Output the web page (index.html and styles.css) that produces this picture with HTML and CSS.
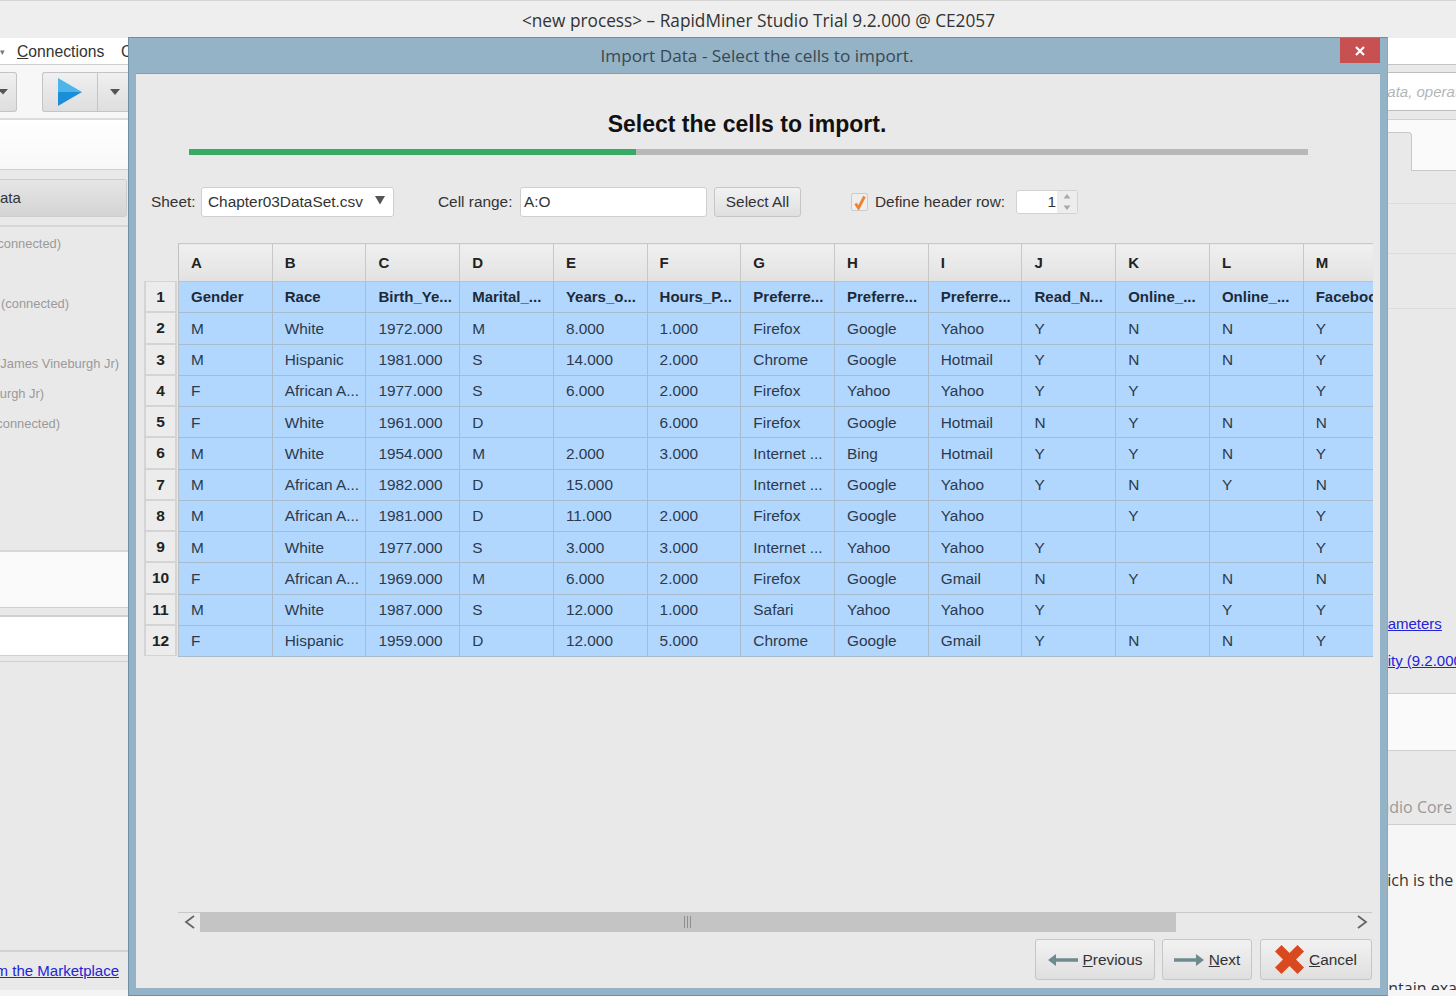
FILE: index.html
```html
<!DOCTYPE html>
<html lang="en">
<head>
<meta charset="utf-8">
<title>RapidMiner Studio - Import Data</title>
<link rel="stylesheet" href="styles.css">
</head>
<body>
<div class="app">
  <header class="app-title">&lt;new process&gt; – RapidMiner Studio Trial 9.2.000 @ CE2057</header>
  <div class="app-main">
    <aside class="left">
      <div class="menu"><span class="menu-cut">▾</span><span class="menu-item"><u>C</u>onnections</span><span class="menu-item2">C</span></div>
      <div class="toolbar">
        <div class="tool-stub"><svg width="10" height="6" viewBox="0 0 10 6"><path d="M-2 0h10L3 5.500z" fill="#555"/></svg></div>
        <div class="run-btn">
          <div class="run-play"><svg width="24" height="28" viewBox="0 0 24 28"><path d="M0 0l24 14H0z" fill="#4db5ea"/><path d="M0 28l24-14H0z" fill="#1a8fd8"/></svg></div>
          <div class="run-menu"><svg width="12" height="7" viewBox="0 0 12 7"><path d="M1 0h10L6 6z" fill="#555"/></svg></div>
        </div>
      </div>
      <div class="white-strip"></div>
      <div class="data-row"><div class="data-btn">ata</div></div>
      <div class="repo">
        <div class="repo-line l1">(connected)</div>
        <div class="repo-line l2">(connected)</div>
        <div class="repo-line l3">(James Vineburgh Jr)</div>
        <div class="repo-line l4">Vineburgh Jr)</div>
        <div class="repo-line l5">(connected)</div>
      </div>
      <div class="pale-band"></div>
      <div class="white-band"></div>
      <div class="left-fill"></div>
      <div class="market"><a href="#">Get more from the Marketplace</a></div>
    </aside>
    <div class="middle"></div>
    <aside class="right">
      <div class="r-menu"></div>
      <div class="r-search"><span>data, operators</span></div>
      <div class="r-tabs"><div class="r-tab"></div></div>
      <div class="r-row r-a"></div>
      <div class="r-row r-b"></div>
      <div class="r-row r-c"></div>
      <div class="r-links">
        <a href="#">parameters</a>
        <a href="#" class="second">Utility (9.2.000)</a>
      </div>
      <div class="r-band"></div>
      <div class="r-core"><span>Studio Core</span></div>
      <div class="r-bottom">
        <div class="r-text t1">which is the</div>
        <div class="r-text t2">contain exa</div>
      </div>
    </aside>
  </div>
</div>

<section class="dialog">
  <div class="dlg-title">Import Data - Select the cells to import.
    <button class="dlg-close" aria-label="Close"><svg width="10" height="10" viewBox="0 0 10 10"><path d="M1 1l8 8M9 1l-8 8" stroke="#fff" stroke-width="2.200"/></svg></button>
  </div>
  <div class="dlg-body">
    <h1 class="step-title">Select the cells to import.</h1>
    <div class="progress"><div class="progress-done"></div></div>
    <div class="controls">
      <label class="lbl lbl-sheet">Sheet:</label>
      <div class="combo"><span>Chapter03DataSet.csv</span><svg width="12" height="9" viewBox="0 0 12 9"><path d="M1 0h10L6 8.500z" fill="#555"/></svg></div>
      <label class="lbl lbl-range">Cell range:</label>
      <div class="textbox">A:O</div>
      <button class="btn btn-all">Select All</button>
      <div class="check"><svg width="14" height="15" viewBox="0 0 14 15"><path d="M2.500 8.500l3 4.500L11.500 1.500" fill="none" stroke="#f0812e" stroke-width="2.800"/></svg></div>
      <label class="lbl lbl-header">Define header row:</label>
      <div class="spinner"><span class="spin-val">1</span><span class="spin-arrows"><svg width="8" height="18" viewBox="0 0 8 18"><path d="M4 1l3.500 4.500h-7zM4 17l-3.500-4.500h7z" fill="#a9a9a9"/></svg></span></div>
    </div>
    <div class="sheet">
      <div class="row-heads">
        <div class="rh-spacer"></div>
        <div class="rh">1</div><div class="rh">2</div><div class="rh">3</div><div class="rh">4</div><div class="rh">5</div><div class="rh">6</div><div class="rh">7</div><div class="rh">8</div><div class="rh">9</div><div class="rh">10</div><div class="rh">11</div><div class="rh">12</div>
      </div>
      <div class="grid-clip">
        <table class="grid">
          <thead><tr><th>A</th><th>B</th><th>C</th><th>D</th><th>E</th><th>F</th><th>G</th><th>H</th><th>I</th><th>J</th><th>K</th><th>L</th><th>M</th></tr></thead>
          <tbody>
            <tr class="hdr"><td>Gender</td><td>Race</td><td>Birth_Ye...</td><td>Marital_...</td><td>Years_o...</td><td>Hours_P...</td><td>Preferre...</td><td>Preferre...</td><td>Preferre...</td><td>Read_N...</td><td>Online_...</td><td>Online_...</td><td>Facebook</td></tr>
            <tr><td>M</td><td>White</td><td>1972.000</td><td>M</td><td>8.000</td><td>1.000</td><td>Firefox</td><td>Google</td><td>Yahoo</td><td>Y</td><td>N</td><td>N</td><td>Y</td></tr>
            <tr><td>M</td><td>Hispanic</td><td>1981.000</td><td>S</td><td>14.000</td><td>2.000</td><td>Chrome</td><td>Google</td><td>Hotmail</td><td>Y</td><td>N</td><td>N</td><td>Y</td></tr>
            <tr><td>F</td><td>African A...</td><td>1977.000</td><td>S</td><td>6.000</td><td>2.000</td><td>Firefox</td><td>Yahoo</td><td>Yahoo</td><td>Y</td><td>Y</td><td></td><td>Y</td></tr>
            <tr><td>F</td><td>White</td><td>1961.000</td><td>D</td><td></td><td>6.000</td><td>Firefox</td><td>Google</td><td>Hotmail</td><td>N</td><td>Y</td><td>N</td><td>N</td></tr>
            <tr><td>M</td><td>White</td><td>1954.000</td><td>M</td><td>2.000</td><td>3.000</td><td>Internet ...</td><td>Bing</td><td>Hotmail</td><td>Y</td><td>Y</td><td>N</td><td>Y</td></tr>
            <tr><td>M</td><td>African A...</td><td>1982.000</td><td>D</td><td>15.000</td><td></td><td>Internet ...</td><td>Google</td><td>Yahoo</td><td>Y</td><td>N</td><td>Y</td><td>N</td></tr>
            <tr><td>M</td><td>African A...</td><td>1981.000</td><td>D</td><td>11.000</td><td>2.000</td><td>Firefox</td><td>Google</td><td>Yahoo</td><td></td><td>Y</td><td></td><td>Y</td></tr>
            <tr><td>M</td><td>White</td><td>1977.000</td><td>S</td><td>3.000</td><td>3.000</td><td>Internet ...</td><td>Yahoo</td><td>Yahoo</td><td>Y</td><td></td><td></td><td>Y</td></tr>
            <tr><td>F</td><td>African A...</td><td>1969.000</td><td>M</td><td>6.000</td><td>2.000</td><td>Firefox</td><td>Google</td><td>Gmail</td><td>N</td><td>Y</td><td>N</td><td>N</td></tr>
            <tr><td>M</td><td>White</td><td>1987.000</td><td>S</td><td>12.000</td><td>1.000</td><td>Safari</td><td>Yahoo</td><td>Yahoo</td><td>Y</td><td></td><td>Y</td><td>Y</td></tr>
            <tr><td>F</td><td>Hispanic</td><td>1959.000</td><td>D</td><td>12.000</td><td>5.000</td><td>Chrome</td><td>Google</td><td>Gmail</td><td>Y</td><td>N</td><td>N</td><td>Y</td></tr>
          </tbody>
        </table>
      </div>
    </div>
    <div class="hscroll">
      <svg class="arrow" width="12" height="14" viewBox="0 0 12 14"><path d="M10 1L2 7l8 6" fill="none" stroke="#666" stroke-width="1.800"/></svg>
      <div class="track"><div class="thumb"><svg width="9" height="12" viewBox="0 0 9 12"><path d="M.5 0v12M3.500 0v12M6.500 0v12" stroke="#8f8f8f"/></svg></div></div>
      <svg class="arrow" width="12" height="14" viewBox="0 0 12 14"><path d="M2 1l8 6-8 6" fill="none" stroke="#666" stroke-width="1.800"/></svg>
    </div>
    <div class="footer">
      <button class="btn btn-foot btn-prev"><svg width="30" height="14" viewBox="0 0 30 14"><path d="M0 7l8-6v4.300h22v3.400H8v4.300z" fill="#6f8a8e"/></svg><span><u>P</u>revious</span></button>
      <button class="btn btn-foot btn-next"><svg width="30" height="14" viewBox="0 0 30 14"><path d="M30 7l-8-6v4.300H0v3.400h22v4.300z" fill="#6f8a8e"/></svg><span><u>N</u>ext</span></button>
      <button class="btn btn-foot btn-cancel"><svg width="29" height="29" viewBox="0 0 29 29"><path d="M6.500 0l8 8 8-8L29 6.500l-8 8 8 8-6.500 6.500-8-8-8 8L0 22.500l8-8-8-8z" fill="#d8491f"/></svg><span><u>C</u>ancel</span></button>
    </div>
  </div>
</section>
</body>
</html>
```
FILE: styles.css
```css
* { box-sizing: border-box; }
html, body { margin: 0; height: 100%; }
body {
  position: relative;
  width: 1456px;
  height: 996px;
  overflow: hidden;
  background: #e9e9e9;
  font-family: "Liberation Sans", Arial, sans-serif;
  color: #222;
}
a { color: #2323d8; }

.app { display: flex; flex-direction: column; height: 996px; }
.app-title {
  height: 38px;
  padding: 9px 0 0 61px;
  text-align: center;
  font: 17.250px/21px "Open Sans", sans-serif;
  color: #333;
  border-top: 1px solid #d4d4d4;
  background: #eeeeee;
}
.app-main { flex: 1; display: flex; min-height: 0; }
.left { width: 129px; flex: none; display: flex; flex-direction: column; overflow: hidden; }
.middle { flex: 1; }
.right { width: 68px; flex: none; display: flex; flex-direction: column; overflow: hidden; }

.menu {
  height: 27px;
  background: #fff;
  border-bottom: 1px solid #cfcfcf;
  display: flex;
  align-items: center;
  padding-top: 2px;
  font-size: 15.700px;
  color: #333;
  white-space: nowrap;
}
.menu-cut { width: 17px; flex: none; font-size: 9px; color: #777; }
.menu-item { width: 104px; flex: none; }
.toolbar {
  height: 55px;
  background: #f7f7f7;
  border-bottom: 2px solid #dcdcdc;
  display: flex;
  align-items: flex-start;
  padding-top: 7px;
}
.tool-stub {
  width: 17px;
  height: 40px;
  flex: none;
  background: linear-gradient(#f0f0f0, #dedede);
  border: 1px solid #c4c4c4;
  border-left: 0;
  border-radius: 0 3px 3px 0;
  display: flex;
  align-items: center;
}
.run-btn {
  margin-left: 25px;
  width: 95px;
  height: 40px;
  flex: none;
  display: flex;
  border: 1px solid #c4c4c4;
  border-right: 0;
  border-radius: 3px 0 0 3px;
  background: linear-gradient(#f0f0f0, #dedede);
}
.run-play { width: 55px; display: flex; align-items: center; justify-content: center; border-right: 1px solid #c4c4c4; }
.run-menu { width: 33px; display: flex; align-items: center; justify-content: center; }
.white-strip { height: 50px; background: linear-gradient(#fff, #f8f8f8); border-bottom: 1px solid #d0d0d0; }
.data-row { height: 57px; padding-top: 9px; border-bottom: 2px solid #d6d6d6; }
.data-btn {
  height: 38px;
  width: 127px;
  background: linear-gradient(#e6e6e6, #d4d4d4);
  border: 1px solid #cdcdcd;
  border-left: 0;
  border-radius: 0 3px 3px 0;
  font-size: 15px;
  line-height: 36px;
  color: #333;
}
.repo { height: 323px; position: relative; font-size: 12.900px; color: #9a9a9a; white-space: nowrap; }
.repo-line { position: absolute; }
.l1 { top: 9px; left: -7px; }
.l2 { top: 69px; left: 1px; }
.l3 { top: 129px; left: -4px; }
.l4 { top: 159px; left: -33px; }
.l5 { top: 189px; left: -8px; }
.pale-band { height: 58px; flex: none; background: #fafafa; border-top: 2px solid #d8d8d8; border-bottom: 1px solid #cfcfcf; }
.white-band { height: 41px; flex: none; margin-top: 7px; background: #fff; border-top: 2px solid #d0d0d0; border-bottom: 1px solid #d0d0d0; }
.left-fill { flex: 1; margin-top: 5px; border-top: 1px solid #d0d0d0; }
.market { height: 46px; flex: none; border-top: 2px solid #d2d2d2; white-space: nowrap; font-size: 15px; padding-top: 10px; display: flex; justify-content: flex-end; padding-right: 10px; background: #e9e9e9; box-shadow: inset 0 -6px 0 #f4f4f4; }

.r-menu { height: 27px; background: #fff; border-bottom: 1px solid #c4c4c4; flex: none; }
.r-search { height: 39px; margin-top: 7px; background: #fff; border-top: 1px solid #bdbdbd; border-bottom: 1px solid #bdbdbd; flex: none; font: italic 15px/37px "Liberation Sans", sans-serif; color: #b5b5b5; white-space: nowrap; }
.r-search span { margin-left: -9px; display: inline-block; }
.r-tabs { height: 52px; margin-top: 8px; border-top: 1px solid #d0d0d0; border-bottom: 1px solid #c8c8c8; background: #fafafa; flex: none; padding-top: 12px; }
.r-tab { width: 24px; height: 39px; background: #e9e9e9; border: 1px solid #c8c8c8; border-left: 0; border-bottom: 0; border-radius: 0 4px 0 0; }
.r-row { flex: none; background: #e9e9e9; }
.r-a { height: 32px; }
.r-b { height: 50px; border-top: 1px solid #dcdcdc; }
.r-c { height: 55px; border-top: 1px solid #dcdcdc; }
.r-links { height: 385px; flex: none; border-top: 1px solid #dcdcdc; padding-top: 306px; white-space: nowrap; font-size: 15px; }
.r-links a { display: block; margin-left: -22px; line-height: 17px; }
.r-links a.second { margin-left: -22px; margin-top: 20px; }
.r-band { height: 58px; flex: none; background: #fafafa; border-top: 1px solid #cfcfcf; border-bottom: 1px solid #cfcfcf; }
.r-core { height: 74px; flex: none; padding-top: 45px; border-bottom: 1px solid #cfcfcf; font: 16px/22px "Open Sans", sans-serif; color: #999; white-space: nowrap; }
.r-core span { margin-left: -23px; display: inline-block; }
.r-bottom { flex: 1; background: #f6f6f6; padding-top: 44px; }
.r-text { font: 16px/22px "Open Sans", sans-serif; color: #333; white-space: nowrap; }
.t1 { margin-left: -23px; }
.t2 { margin: 86px 0 0 -17px; height: 13px; overflow: hidden; }

.dialog {
  position: absolute;
  left: 128px;
  top: 37px;
  width: 1260px;
  height: 959px;
  background: #94b3c7;
  border: 1px solid #6e8fa3;
  border-right-color: #8aa9bd;
  display: flex;
  flex-direction: column;
  padding: 0 7px 7px 7px;
}
.dlg-title {
  height: 36px;
  flex: none;
  position: relative;
  text-align: center;
  font: 17.200px/36px "Open Sans", sans-serif;
  color: #3a4850;
  padding-right: 2px;
  border-bottom: 1px solid #7f9fb3;
}
.dlg-close {
  position: absolute;
  right: 0;
  top: 0;
  width: 40px;
  height: 25px;
  border: 0;
  padding: 0;
  background: #c75050;
  display: flex;
  align-items: center;
  justify-content: center;
}
.dlg-body {
  flex: 1;
  background: #e9e9e9;
  display: flex;
  flex-direction: column;
  min-height: 0;
}
.step-title {
  margin: 37px 22px 0 0;
  height: 26px;
  text-align: center;
  font: bold 23px/26px "Liberation Sans", sans-serif;
  color: #111;
}
.progress { margin: 12px 72px 0 53px; height: 6px; background: #b8b8b8; flex: none; }
.progress-done { width: 447px; height: 6px; background: #37ab63; }
.controls { display: flex; align-items: center; height: 30px; margin-top: 32px; flex: none; position: relative; }
.lbl { font-size: 15.400px; color: #333; white-space: nowrap; }
.lbl-sheet { margin-left: 15px; width: 50px; }
.combo {
  width: 193px;
  height: 30px;
  background: #fff;
  border: 1px solid #cfcfcf;
  border-radius: 3px;
  display: flex;
  align-items: center;
  justify-content: space-between;
  padding: 0 7px 0 6px;
  font-size: 15.400px;
  color: #333;
  white-space: nowrap;
}
.combo svg { margin-top: -3px; }
.lbl-range { margin-left: 44px; width: 82px; }
.textbox {
  width: 187px;
  height: 30px;
  background: #fff;
  border: 1px solid #cfcfcf;
  border-radius: 3px;
  padding: 0 3px;
  font-size: 15.400px;
  line-height: 28px;
  color: #333;
}
.btn {
  background: linear-gradient(#f2f2f2, #dfdfdf);
  border: 1px solid #c6c6c6;
  border-radius: 3px;
  font-family: "Liberation Sans", sans-serif;
  font-size: 15.400px;
  color: #333;
  padding: 0;
}
.btn-all { width: 87px; height: 30px; margin-left: 7px; }
.check {
  width: 17px;
  height: 18px;
  margin-left: 50px;
  background: #eeeeee;
  border: 1px solid #cbcbcb;
  border-radius: 2px;
  display: flex;
  align-items: center;
  justify-content: center;
}
.lbl-header { margin-left: 7px; width: 141px; }
.spinner {
  width: 62px;
  height: 24px;
  background: #fff;
  border: 1px solid #d2d2d2;
  border-radius: 3px;
  display: flex;
  align-items: center;
  justify-content: flex-end;
  font-size: 15.400px;
  color: #333;
  overflow: hidden;
}
.spin-val { margin-right: 1px; }
.spin-arrows { width: 20px; height: 22px; background: #ededed; display: flex; align-items: center; justify-content: center; }

.sheet { display: flex; margin: 26px 0 0 8px; flex: none; }
.row-heads { width: 34px; flex: none; }
.rh-spacer { height: 38px; }
.rh {
  width: 33px;
  height: 31.250px;
  background: #ececec;
  border: 2px solid #d4d4d4;
  border-top-width: 1px;
  border-bottom-width: 1px;
  text-align: center;
  font-weight: bold;
  font-size: 15.500px;
  line-height: 29px;
  color: #222;
}
.grid-clip { width: 1195px; overflow: hidden; flex: none; }
.grid { table-layout: fixed; border-collapse: collapse; width: 1218.500px; }
.grid th, .grid td {
  width: 93.730px;
  padding: 0 0 0 12px;
  text-align: left;
  white-space: nowrap;
  overflow: visible;
  font-size: 15.400px;
  border: 1px solid #a9bccc;
}
.grid th {
  height: 38px;
  background: linear-gradient(#f0f0f0, #e2e2e2);
  border-color: #c8c8c8;
  border-bottom-color: #c0c0c0;
  font-size: 15px;
  font-weight: bold;
  color: #222;
}
.grid td { height: 31.250px; padding-top: 1px; background: #b2d7ff; color: #2c3a4c; }
.grid .hdr td { font-weight: bold; font-size: 15px; color: #1e2a38; padding-top: 0; padding-bottom: 1px; }
.grid th:first-child, .grid td:first-child { border-left: 1px solid #c0c0c0; }

.hscroll {
  margin: auto 8px 0 42px;
  height: 21px;
  flex: none;
  display: flex;
  align-items: flex-start;
  border-top: 1px solid #c8c8c8;
}
.arrow { flex: none; margin: 2px 5px 0 6px; width: 12px; }
.arrow:last-child { margin: 2px 4px 0 6px; }
.track { flex: 1; height: 20px; margin: -1px 0 0 -1px; }
.thumb { width: 976px; height: 20px; background: #c4c4c4; display: flex; align-items: center; justify-content: center; }
.footer { height: 55px; flex: none; display: flex; justify-content: flex-end; gap: 7px; padding: 6px 8px 0 0; }
.btn-foot { height: 41px; display: flex; align-items: center; justify-content: center; gap: 5px; }
.btn-prev { width: 120px; }
.btn-next { width: 90px; }
.btn-cancel { width: 112px; margin-left: 1px; }
```
